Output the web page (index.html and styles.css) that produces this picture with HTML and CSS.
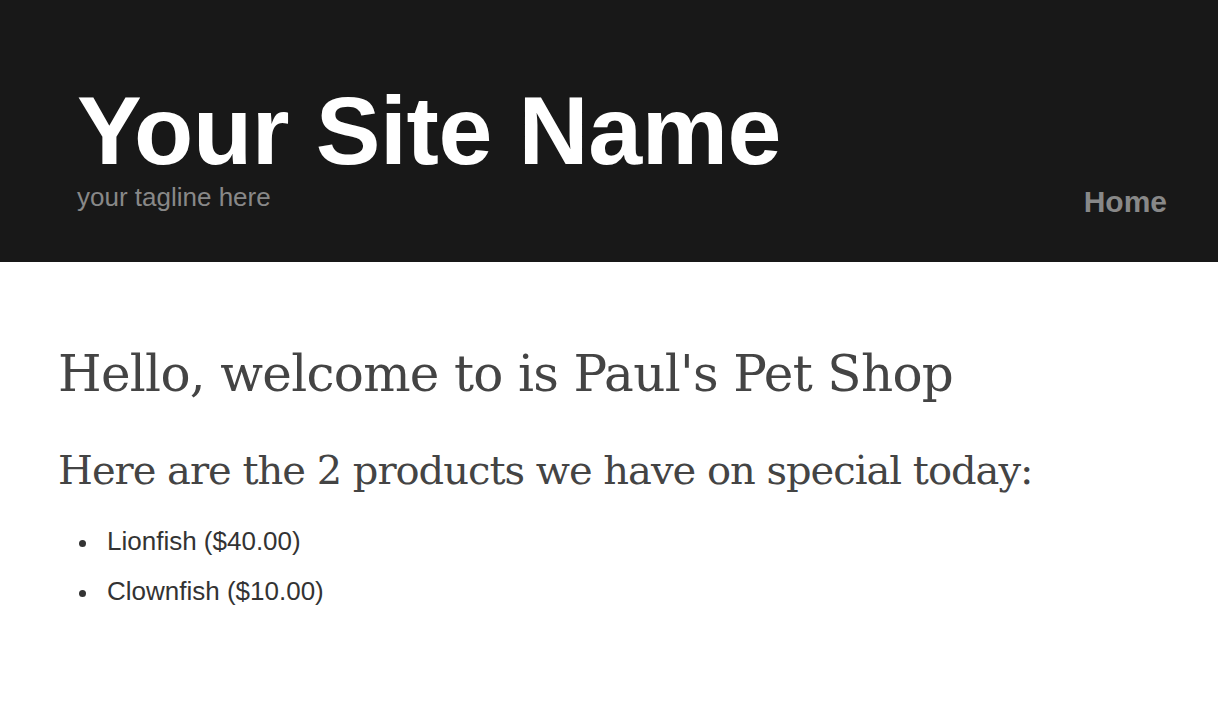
FILE: index.html
```html
<!DOCTYPE html>
<html>
<head>
<meta charset="utf-8">
<link rel="stylesheet" href="styles.css">
</head>
<body>
<header class="site-header">
  <div class="brand">
    <h1 class="site-name">Your Site Name</h1>
    <p class="tagline">your tagline here</p>
  </div>
  <nav class="nav">
    <a class="nav-link" href="#">Home</a>
  </nav>
</header>
<main class="content">
  <h1 class="welcome">Hello, welcome to is Paul's Pet Shop</h1>
  <h2 class="specials">Here are the 2 products we have on special today:</h2>
  <ul class="products">
    <li>Lionfish ($40.00)</li>
    <li>Clownfish ($10.00)</li>
  </ul>
</main>
</body>
</html>
```
FILE: styles.css
```css
html, body {
  margin: 0;
  padding: 0;
  background: #fff;
}
body {
  font-family: "Liberation Sans", Arial, sans-serif;
}
.site-header {
  background: #181818;
  height: 262px;
  box-sizing: border-box;
  display: flex;
  justify-content: space-between;
  align-items: flex-start;
  padding: 82px 51px 0 77px;
}
.site-name {
  margin: 0;
  color: #fff;
  font-size: 97px;
  font-weight: bold;
  line-height: 1;
  letter-spacing: -0.4px;
}
.tagline {
  margin: 5px 0 0;
  color: #888;
  font-size: 26px;
  line-height: 1;
}
.nav {
  padding-top: 105px;
}
.nav-link {
  display: block;
  color: #888;
  font-size: 30px;
  line-height: 1;
  font-weight: bold;
  text-decoration: none;
}
.content {
  padding: 87px 58px 0;
  color: #444;
}
.welcome {
  font-family: "DejaVu Serif", serif;
  font-weight: normal;
  font-size: 50px;
  line-height: 1;
  letter-spacing: -0.7px;
  margin: 0 0 51px;
}
.specials {
  font-family: "DejaVu Serif", serif;
  font-weight: normal;
  font-size: 40px;
  line-height: 1;
  letter-spacing: -1px;
  margin: 0 0 36px;
}
.products {
  margin: 0;
  padding: 0;
  list-style: none;
  color: #333;
  font-size: 26px;
}
.products li {
  line-height: 30px;
  margin-bottom: 20px;
}
.products li::before {
  content: "";
  display: inline-block;
  width: 7px;
  height: 7px;
  border-radius: 50%;
  background: #333;
  margin: 0 21px 0 21px;
  vertical-align: middle;
}
```
